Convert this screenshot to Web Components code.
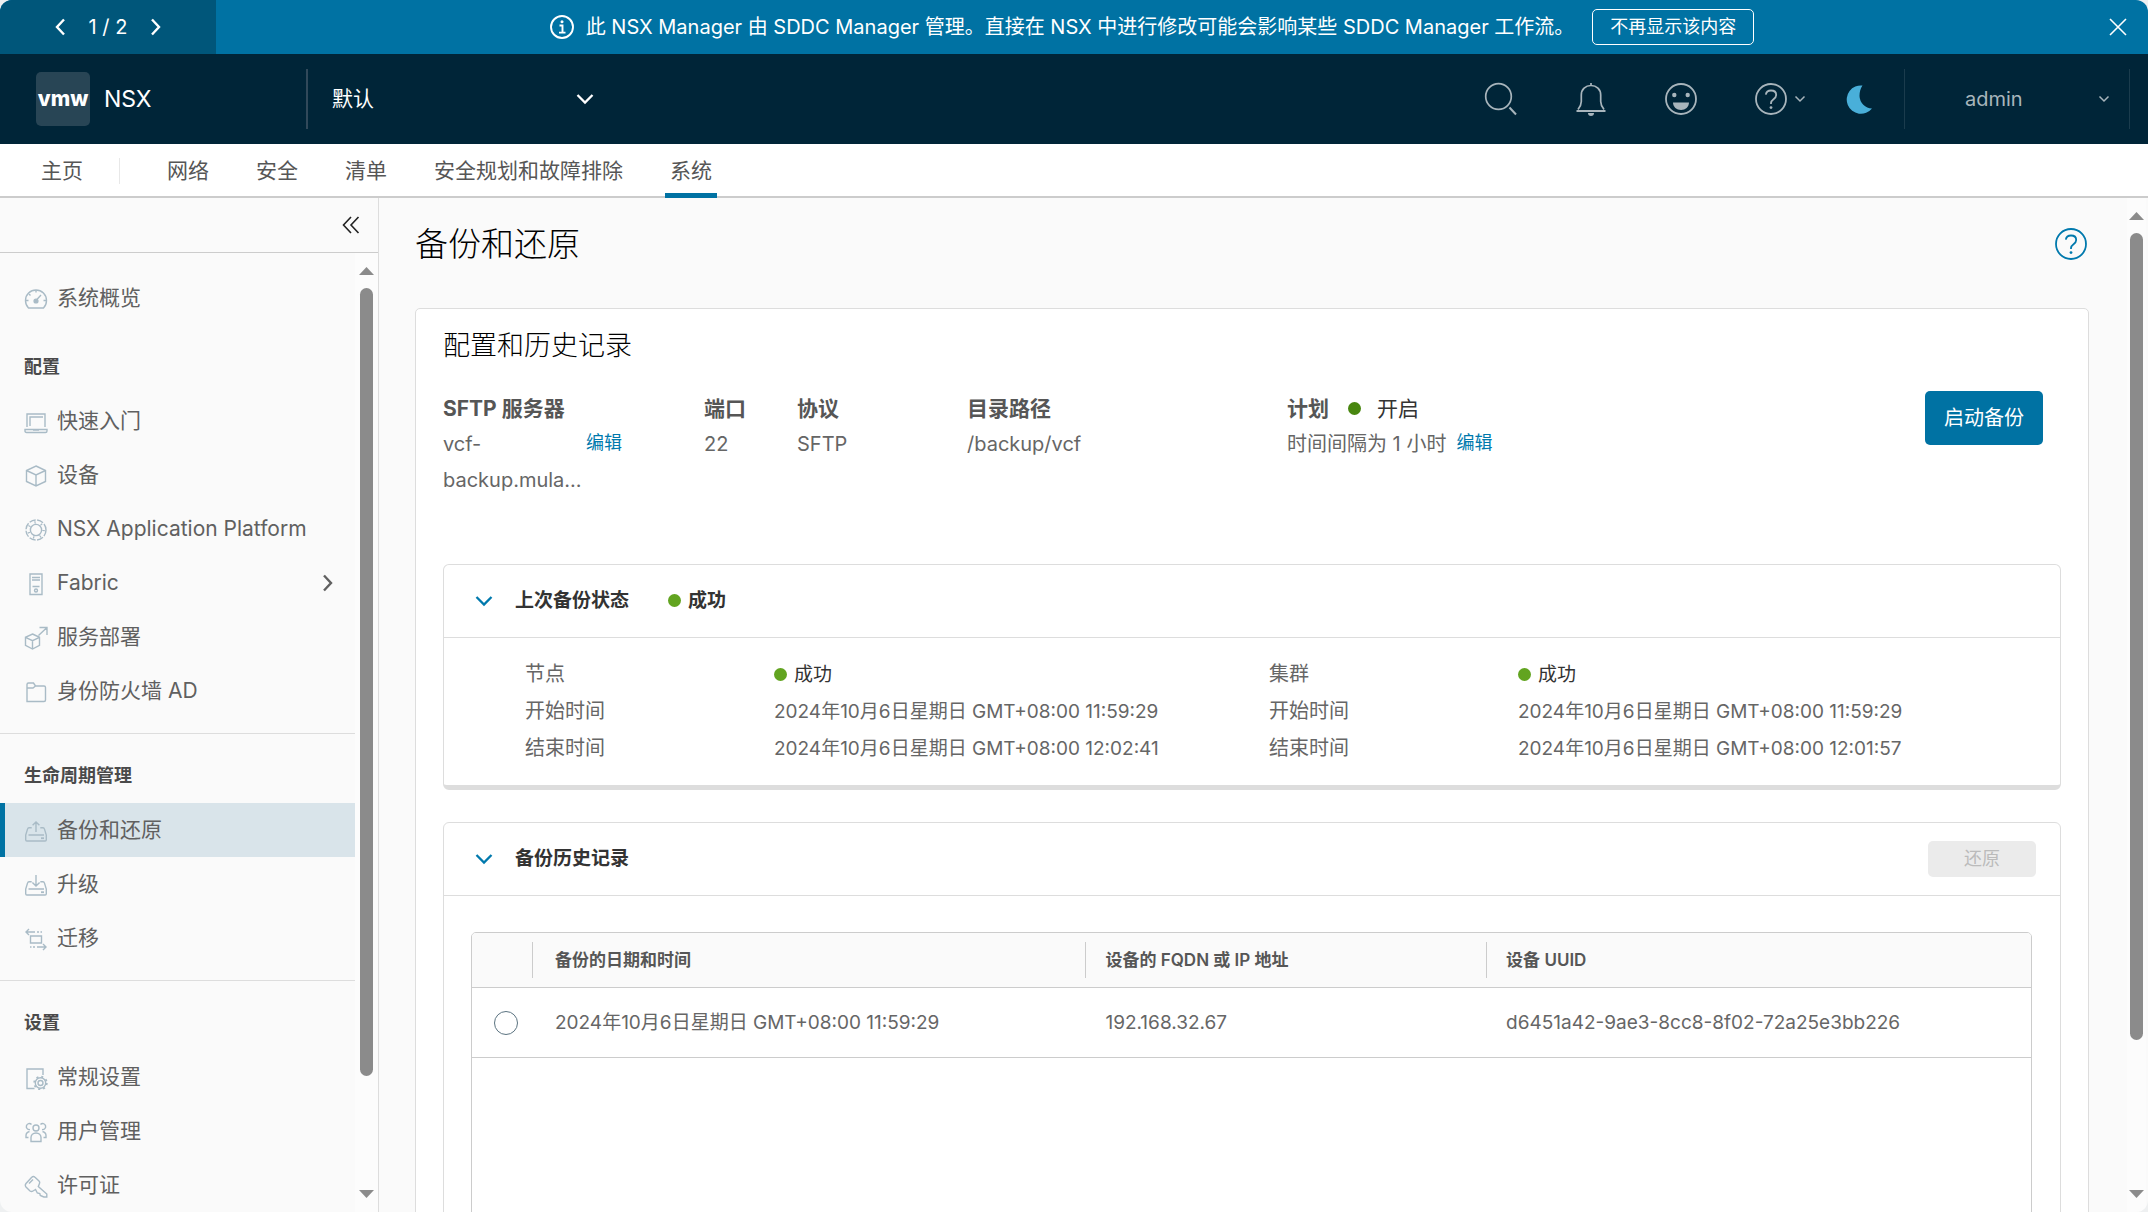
<!DOCTYPE html>
<html lang="zh-CN">
<head>
<meta charset="utf-8">
<meta name="viewport" content="width=device-width, initial-scale=1">
<title>NSX - 备份和还原</title>
<style>
  html, body { margin: 0; height: 100%; }
  body {
    overflow: hidden;
    background: #eef0f1;
    color: #666;
    font-family: Inter, "Noto Sans CJK SC", sans-serif;
    font-size: 20px;
    font-weight: 400;
    line-height: 36px;
  }
</style>
</head>
<body>
<nsx-app></nsx-app>

<script>
const sheet = `
  *, *::before, *::after { box-sizing: border-box; }
  button, select, input { font: inherit; color: inherit; margin: 0; }
  button { background: none; border: 0; padding: 0; cursor: pointer; }
  a { color: inherit; text-decoration: none; }
  h1, h2, h3, p, ul, dl, dd, dt { margin: 0; padding: 0; font: inherit; }
  ul { list-style: none; }
`;

const define = (name, render) => customElements.define(name, class extends HTMLElement {
  constructor() {
    super();
    this.attachShadow({ mode: 'open' });
  }
  connectedCallback() {
    this.shadowRoot.innerHTML = '<style>' + sheet + '</style>' + render(this);
  }
});

/* Icon set: every glyph is [viewBox, body]; strokes take currentColor. */
const icons = {
  left: ['0 0 12 18', '<path d="M10 1.5 3 9l7 7.500" stroke-width="2.400"/>'],
  right: ['0 0 12 18', '<path d="M2 1.500 9 9l-7 7.500" stroke-width="2.400"/>'],
  down: ['0 0 18 12', '<path d="M1.500 2 9 9.500 16.500 2" stroke-width="2.300"/>'],
  caret: ['0 0 12 8', '<path d="M1.500 1.500 6 6l4.500-4.500" stroke-width="1.500"/>'],
  collapse: ['0 0 18 18', '<path d="M9 1 1.500 9 9 17M16.500 1 9 9l7.500 8" stroke-width="1.600"/>'],
  close: ['0 0 18 18', '<path d="M1 1l16 16M17 1 1 17" stroke-width="1.600"/>'],
  info: ['0 0 24 24', '<circle cx="12" cy="12" r="11" stroke-width="1.900"/><circle cx="12" cy="6.800" r="1.500" fill="currentColor" stroke="none"/><path d="M9.500 10.500H12.500V17.500M9 17.600h6.500" stroke-width="1.900"/>'],
  search: ['0 0 34 34', '<circle cx="14.500" cy="14.500" r="12.800" stroke-width="1.700"/><path d="M25.500 25.500 32 32.500" stroke-width="2"/>'],
  bell: ['0 0 34 34', '<path d="M17 1v2.500M4 27.500c2-2.500 3.300-4.500 3.300-8V13C7.300 7.500 11.500 3.500 17 3.500s9.700 4 9.700 9.500v6.500c0 3.500 1.300 5.500 3.300 8" stroke-width="1.700"/><path d="M2.500 29h29" stroke-width="2"/><path d="M14 31h6a3 3 0 0 1-6 0z" fill="currentColor" stroke="none"/>'],
  smile: ['0 0 34 34', '<circle cx="17" cy="17" r="15" stroke-width="1.800"/><circle cx="10.300" cy="13" r="2.200" fill="currentColor" stroke="none"/><circle cx="23.700" cy="13" r="2.200" fill="currentColor" stroke="none"/><path d="M9 20.500h16c0 4.500-3.600 7.500-8 7.500s-8-3-8-7.500z" fill="currentColor" stroke="none"/>'],
  help: ['0 0 34 34', '<circle cx="17" cy="17" r="15" stroke-width="1.800"/><path d="M11.800 12.600c.4-2.600 2.500-4.100 5.200-4.100 3 0 5.200 1.700 5.200 4.500 0 4.300-5.200 4-5.200 8v1" stroke-width="1.800"/><circle cx="17" cy="25.600" r="1.400" fill="currentColor" stroke="none"/>'],
  moon: ['0 0 30 30', '<path d="M18.500 1.500A14.200 14.200 0 1 0 28 24.500 13 13 0 0 1 15.500 12c0-4.300 1-7.800 3-10.500z" fill="currentColor" stroke="none"/>'],
  gauge: ['0 0 24 24', '<path d="M4.500 21C2.500 19 1.500 16.500 1.500 13.500a10.500 10.500 0 0 1 21 0c0 3-1 5.500-3 7.500z"/><path d="M12 13.500l5-5.500M12 3v2.500M2 13.500h2.500M19.500 13.500H22M5 7l1.500 1.500"/><circle cx="12" cy="14" r="1.900" fill="currentColor"/>'],
  laptop: ['0 0 24 24', '<path d="M3 17V4h18v13M6 16V7h13M1 19.500h22v1.500c0 1-.5 1.500-1.500 1.500h-19c-1 0-1.500-.5-1.500-1.500z"/><path d="M9 20h6"/>'],
  box: ['0 0 24 24', '<path d="M12 2l9.500 4.500v11L12 22l-9.500-4.500v-11zM2.500 6.500 12 11l9.500-4.500M12 11v11"/>'],
  platform: ['0 0 24 24', '<circle cx="12" cy="12" r="10" stroke-dasharray="6.500 1.500"/><circle cx="12" cy="12" r="5.600"/><circle cx="12" cy="12" r="7.600" stroke-dasharray="1.200 5.600" stroke-width="2.500"/>'],
  server: ['0 0 24 24', '<path d="M6 2h12v20.500H6zM8 5.500h8M8 8h8M8.500 14.500h7"/><circle cx="12" cy="18.500" r="1.500"/>'],
  deploy: ['0 0 24 24', '<path d="M8.500 8l7 3.300v8L8.500 23l-7-3.700v-8zM1.500 11.300l7 3.400 7-3.400M8.500 14.700V23M14.500 9.500 23 1.500M15.500 1.500H23V9"/>'],
  folder: ['0 0 24 24', '<path d="M3 21.500V4.500c0-1 .5-1.500 1.500-1.500h5l2 3H20c1 0 1.500.5 1.500 1.500V20c0 1-.5 1.500-1.500 1.500zM3 8h6l2.500-2"/>'],
  backup: ['0 0 24 24', '<path d="M7.700 8.700H5c-.8 0-1.200.4-1.400 1.200L1.700 16v4.800c0 .8.400 1.200 1.200 1.200h18.200c.8 0 1.200-.4 1.200-1.200V16l-1.900-6.100c-.2-.8-.6-1.200-1.400-1.200h-2.700M4.500 16h15.500M12 13V3M8.600 6.300 12 2.900l3.400 3.400"/><path d="M17 19.200h3" stroke-width="1.800"/>'],
  upgrade: ['0 0 24 24', '<path d="M7.700 8.700H5c-.8 0-1.200.4-1.400 1.200L1.700 16v4.800c0 .8.400 1.200 1.200 1.200h18.200c.8 0 1.200-.4 1.200-1.200V16l-1.900-6.100c-.2-.8-.6-1.200-1.400-1.200h-2.700M4.500 16h15.500M12 2v10.800M8.400 9.400 12 13l3.600-3.600"/><path d="M17 19.200h3" stroke-width="1.800"/>'],
  migrate: ['0 0 24 24', '<path d="M6.500 9h11v7h-11zM2 5h9M13 5h2M16.500 5h1.500M5 2 2 5l3 3M22 20h-9M11 20H9M7.500 20H6M19 17l3 3-3 3"/>'],
  config: ['0 0 24 24', '<path d="M10.500 22.500H3V3h16v6"/><circle cx="16.500" cy="17" r="2.500"/><circle cx="16.500" cy="17" r="5.200"/><circle cx="16.500" cy="17" r="6.300" stroke-dasharray="2 2.950" stroke-width="1.800"/>'],
  users: ['0 0 24 24', '<circle cx="12" cy="8" r="3"/><path d="M7 21.500v-4c0-2.500 2-4.500 5-4.500s5 2 5 4.500v4zM7.500 4.500A3 3 0 1 0 6 9.500M16.500 4.500A3 3 0 1 1 18 9.500M5.500 11.500c-2 .5-3.500 2-3.500 4v2h2.500M18.500 11.500c2 .5 3.500 2 3.500 4v2h-2.500"/>'],
  key: ['0 0 24 24', '<path d="M11.500 15.500 9 17c-1 .7-2 .7-3 0l-4-4c-.8-1-.8-2.500 0-3.500l5.500-6c1-1 2.500-1.300 3.500-.3l4 3.800c1 1 .8 2 .3 3l-1 2.500 8.500 7.500v3h-3l-3.500-1.500-.500-2-2.500-.5z"/><path d="M5 9.500l4-4"/>']
};

/* <nsx-icon name size> */
define('nsx-icon', el => {
  const [box, body] = icons[el.getAttribute('name')];
  const w = +box.split(' ')[2], h = +box.split(' ')[3];
  const width = +(el.getAttribute('size') || w);
  return `<style>:host{display:inline-flex;flex:none}svg{display:block;fill:none;stroke:currentColor}</style>
  <svg viewBox="${box}" width="${width}" height="${Math.round(width * h / w)}" stroke-width="1.400" aria-hidden="true">${body}</svg>`;
});

/* <nsx-status wide> green state dot followed by its text */
define('nsx-status', () => `
  <style>
    :host { display: inline-flex; align-items: center; gap: 7px; color: #333; --dot: #62a420; }
    :host([wide]) { gap: 16px; --dot: #48860f; }
    i { width: 13px; height: 13px; border-radius: 50%; background: var(--dot); }
  </style><i></i><span><slot></slot></span>`);

/* <nsx-scrollbar thumb rest> rail with arrows; the thumb takes its share of the track */
define('nsx-scrollbar', el => `
  <style>
    :host { display: flex; flex-direction: column; align-items: center; flex: none; box-sizing: border-box; background: #fcfcfc; }
    svg { display: block; fill: #8b8b8b; flex: none; }
    .track { flex: 1; width: 13px; margin: 13px 0; display: flex; flex-direction: column; }
    .thumb { flex: ${el.getAttribute('thumb')} 0 0; background: #8b8b8b; border-radius: 7px; }
    .rest { flex: ${el.getAttribute('rest')} 0 0; }
  </style>
  <svg width="15" height="8"><path d="M0 8 7.500 0 15 8z"/></svg>
  <div class="track"><div class="thumb"></div><div class="rest"></div></div>
  <svg width="15" height="8"><path d="M0 0h15L7.500 8z"/></svg>`);

define('nsx-banner', () => `
  <style>
    :host { display: flex; height: 54px; background: #0072a3; color: #fff; line-height: 30px; }
    .pager { width: 216px; background: #00567a; display: flex; align-items: center; justify-content: center; gap: 23px; }
    .message { flex: 1; display: flex; align-items: center; justify-content: center; gap: 12px; white-space: nowrap; }
    .dismiss { height: 36px; padding: 0 17px; margin-left: 6px; border: 1px solid #fff; border-radius: 5px; font-size: 18px; line-height: 30px; }
    .close { width: 60px; display: flex; align-items: center; justify-content: center; }
    button { display: inline-flex; align-items: center; }
  </style>
  <div class="pager">
    <button aria-label="上一条"><nsx-icon name="left"></nsx-icon></button>
    <span>1 / 2</span>
    <button aria-label="下一条"><nsx-icon name="right"></nsx-icon></button>
  </div>
  <div class="message">
    <nsx-icon name="info"></nsx-icon>
    <span>此 NSX Manager 由 SDDC Manager 管理。直接在 NSX 中进行修改可能会影响某些 SDDC Manager 工作流。</span>
    <button class="dismiss">不再显示该内容</button>
  </div>
  <button class="close" aria-label="关闭"><nsx-icon name="close"></nsx-icon></button>`);

define('nsx-header', () => `
  <style>
    :host { display: flex; align-items: center; height: 90px; background: #002538; color: #a8b5bc; }
    .brand { display: flex; align-items: center; gap: 14px; width: 306px; padding-left: 36px; color: #fff; font-size: 23px; }
    .logo { width: 54px; height: 54px; border-radius: 5px; background: #284555; display: flex; align-items: center; justify-content: center; font-size: 21px; font-weight: 800; }
    .scope { display: flex; align-items: center; height: 60px; width: 288px; padding-left: 24px; border-left: 2px solid #31495a; color: #fff; font-size: 21px; }
    select { flex: 1; appearance: none; background: transparent; border: 0; padding: 0; outline: 0; height: 60px; }
    .tools { margin-left: auto; display: flex; align-items: center; gap: 56px; padding-right: 30px; }
    .tools button { display: flex; align-items: center; }
    .help { gap: 6px; }
    .moon { color: #49afd9; margin-left: -18px; }
    .user { display: flex; align-items: center; justify-content: space-between; height: 60px; width: 226px; padding: 0 19px 0 60px; border: solid #1b3c4d; border-width: 0 1px; margin-right: 18px; }
  </style>
  <div class="brand"><span class="logo">vmw</span><span>NSX</span></div>
  <label class="scope"><select aria-label="范围"><option>默认</option></select><nsx-icon name="down"></nsx-icon></label>
  <div class="tools">
    <button aria-label="搜索"><nsx-icon name="search"></nsx-icon></button>
    <button aria-label="警报"><nsx-icon name="bell"></nsx-icon></button>
    <button aria-label="反馈"><nsx-icon name="smile"></nsx-icon></button>
    <button class="help" aria-label="帮助"><nsx-icon name="help"></nsx-icon><nsx-icon name="caret"></nsx-icon></button>
    <button class="moon" aria-label="深色主题"><nsx-icon name="moon"></nsx-icon></button>
  </div>
  <button class="user"><span>admin</span><nsx-icon name="caret"></nsx-icon></button>`);

define('nsx-tabs', () => `
  <style>
    :host { display: flex; height: 54px; padding: 0 36px; gap: 37px; background: #fff; border-bottom: 2px solid #ccc; color: #565656; font-size: 21px; box-sizing: border-box; }
    a { height: 54px; padding: 0 5px; line-height: 53px; white-space: nowrap; }
    a[aria-current] { border-bottom: 5px solid #0072a3; }
    i { width: 1px; height: 26px; margin: 14px 5px 0 -6px; background: #e8e8e8; }
  </style>
  <a href="#home">主页</a><i></i><a href="#network">网络</a><a href="#security">安全</a><a href="#inventory">清单</a>
  <a href="#plan">安全规划和故障排除</a><a href="#system" aria-current="page">系统</a>`);

/* <nsx-nav-item icon active expandable>label</nsx-nav-item> */
define('nsx-nav-item', el => `
  <style>
    :host { display: block; }
    a { display: flex; align-items: center; gap: 9px; height: 54px; padding: 0 21px 0 19px; border-left: 5px solid transparent; font-size: 21px; line-height: 52px; white-space: nowrap; }
    .icon { color: #a9bbc6; margin-top: 2px; }
    .label { flex: 1; }
    :host([active]) a { background: #d9e4ea; border-left-color: #0072a3; }
  </style>
  <a href="#${el.getAttribute('icon')}"><nsx-icon class="icon" name="${el.getAttribute('icon')}"></nsx-icon>
  <span class="label"><slot></slot></span>${el.hasAttribute('expandable') ? '<nsx-icon name="right"></nsx-icon>' : ''}</a>`);

/* <nsx-nav-section heading divided> */
define('nsx-nav-section', el => `
  <style>
    :host { display: block; padding-top: 15px; }
    :host([divided]) .body { border-top: 1px solid #ddd; padding-top: 15px; }
    h2 { height: 54px; padding-left: 24px; color: #4a4a4a; font-size: 18px; font-weight: 700; line-height: 54px; }
  </style>
  <div class="body"><h2>${el.getAttribute('heading')}</h2><slot></slot></div>`);

define('nsx-sidebar', () => `
  <style>
    :host { display: flex; flex-direction: column; width: 379px; flex: none; min-height: 0; border-right: 1px solid #ddd; box-sizing: border-box; color: #606060; }
    .top { display: flex; align-items: center; justify-content: flex-end; height: 55px; padding-right: 18px; border-bottom: 1px solid #ccc; flex: none; color: #222; }
    .body { flex: 1; min-height: 0; display: flex; }
    nav { flex: 1; min-width: 0; overflow: hidden; padding-top: 18px; }
    nsx-scrollbar { width: 23px; padding: 14px 0; }
    .top button { display: flex; }
  </style>
  <div class="top"><button aria-label="折叠"><nsx-icon name="collapse"></nsx-icon></button></div>
  <div class="body">
    <nav>
      <nsx-nav-item icon="gauge">系统概览</nsx-nav-item>
      <nsx-nav-section heading="配置">
        <nsx-nav-item icon="laptop">快速入门</nsx-nav-item>
        <nsx-nav-item icon="box">设备</nsx-nav-item>
        <nsx-nav-item icon="platform">NSX Application Platform</nsx-nav-item>
        <nsx-nav-item icon="server" expandable>Fabric</nsx-nav-item>
        <nsx-nav-item icon="deploy">服务部署</nsx-nav-item>
        <nsx-nav-item icon="folder">身份防火墙 AD</nsx-nav-item>
      </nsx-nav-section>
      <nsx-nav-section heading="生命周期管理" divided>
        <nsx-nav-item icon="backup" active>备份和还原</nsx-nav-item>
        <nsx-nav-item icon="upgrade">升级</nsx-nav-item>
        <nsx-nav-item icon="migrate">迁移</nsx-nav-item>
      </nsx-nav-section>
      <nsx-nav-section heading="设置" divided>
        <nsx-nav-item icon="config">常规设置</nsx-nav-item>
        <nsx-nav-item icon="users">用户管理</nsx-nav-item>
        <nsx-nav-item icon="key">许可证</nsx-nav-item>
      </nsx-nav-section>
    </nav>
    <nsx-scrollbar thumb="788" rest="101"></nsx-scrollbar>
  </div>`);

/* <nsx-summary> connection settings row with the start button */
define('nsx-summary', () => `
  <style>
    :host { display: flex; align-items: flex-start; height: 173px; }
    dl { flex: 1; display: grid; grid-template-columns: 261px 93px 170px 320px 1fr; }
    dt { height: 35px; color: #565656; font-size: 21px; font-weight: 700; line-height: 35px; display: flex; align-items: center; gap: 19px; white-space: nowrap; }
    dd { display: flex; gap: 10px; line-height: 36px; }
    nsx-status { font-weight: 400; }
    .host { width: 133px; }
    a { color: #0079ad; font-size: 18px; line-height: 34px; }
    .start { height: 54px; padding: 0 19px; margin-right: 18px; border-radius: 5px; background: #0072a3; color: #fff; font-size: 20px; line-height: 54px; }
  </style>
  <dl>
    <div><dt>SFTP 服务器</dt><dd><span class="host">vcf-<br>backup.mula...</span><a href="#edit-server">编辑</a></dd></div>
    <div><dt>端口</dt><dd>22</dd></div>
    <div><dt>协议</dt><dd>SFTP</dd></div>
    <div><dt>目录路径</dt><dd>/backup/vcf</dd></div>
    <div><dt>计划<nsx-status wide>开启</nsx-status></dt><dd>时间间隔为 1 小时<a href="#edit-schedule">编辑</a></dd></div>
  </dl>
  <button class="start">启动备份</button>`);

define('nsx-panel', el => `
  <style>
    :host { display: block; border: 1px solid #ddd; border-radius: 6px; background: #fff; }
    :host([raised]) { border-bottom-width: 5px; }
    .head { display: flex; align-items: center; height: 73px; padding: 0 24px 0 31px; border-bottom: 1px solid #ddd; }
    .toggle { display: flex; align-items: center; gap: 22px; color: #0079ad; }
    h3 { color: #333; font-size: 19px; font-weight: 700; line-height: 36px; }
    .extra { flex: 1; padding-left: 39px; font-size: 19px; font-weight: 700; }
  </style>
  <div class="head">
    <button class="toggle" aria-expanded="true"><nsx-icon name="down"></nsx-icon><h3>${el.getAttribute('heading')}</h3></button>
    <div class="extra"><slot name="extra"></slot></div>
    <slot name="action"></slot>
  </div>
  <slot></slot>`);

/* <nsx-run subject start end> one backup run */
define('nsx-run', el => `
  <style>
    :host { display: block; }
    dl { display: grid; grid-template-columns: 249px 1fr; font-size: 20px; line-height: 37px; }
    dd { white-space: nowrap; font-size: 19px; }
  </style>
  <dl>
    <dt>${el.getAttribute('subject')}</dt><dd><nsx-status>成功</nsx-status></dd>
    <dt>开始时间</dt><dd>${el.getAttribute('start')}</dd>
    <dt>结束时间</dt><dd>${el.getAttribute('end')}</dd>
  </dl>`);

define('nsx-history', () => `
  <style>
    :host { display: block; padding: 36px 28px 0 27px; }
    .grid { border: 1px solid #ccc; border-radius: 5px; min-height: 340px; overflow: hidden; }
    table { width: 100%; border-collapse: separate; border-spacing: 0; table-layout: fixed; }
    th, td { text-align: left; padding: 0; border-bottom: 1px solid #ccc; white-space: nowrap; }
    thead { background: #fafafa; }
    th { height: 55px; color: #565656; font-size: 17px; font-weight: 600; line-height: 36px; }
    th div { padding-left: 19px; border-left: 1px solid #ccc; }
    th:nth-child(2) div { padding-left: 22px; }
    td { height: 70px; padding-left: 20px; font-size: 19px; }
    td:nth-child(2) { padding-left: 23px; }
    td:first-child { padding-left: 22px; }
    input { appearance: none; display: block; width: 24px; height: 24px; border: 1px solid #5b7380; border-radius: 50%; background: #fff; }
  </style>
  <div class="grid"><table>
    <colgroup><col style="width:60px"><col style="width:35.500%"><col style="width:25.700%"><col></colgroup>
    <thead><tr><th></th><th><div>备份的日期和时间</div></th><th><div>设备的 FQDN 或 IP 地址</div></th><th><div>设备 UUID</div></th></tr></thead>
    <tbody><tr>
      <td><input type="radio" name="backup" aria-label="选择备份"></td>
      <td>2024年10月6日星期日 GMT+08:00 11:59:29</td><td>192.168.32.67</td><td>d6451a42-9ae3-8cc8-8f02-72a25e3bb226</td>
    </tr></tbody>
  </table></div>`);

define('nsx-backup-page', () => `
  <style>
    :host { display: block; flex: 1; min-width: 0; overflow: hidden; padding: 22px 38px 0 36px; }
    .title { display: flex; align-items: center; justify-content: space-between; height: 48px; margin-bottom: 40px; padding-right: 1px; }
    h1 { color: #000; font-size: 33px; font-weight: 300; line-height: 48px; }
    .title a { color: #0079ad; display: flex; }
    .card { border: 1px solid #ddd; border-radius: 5px; background: #fff; padding: 19px 27px 60px; }
    h2 { color: #000; font-size: 27px; font-weight: 300; line-height: 36px; margin-bottom: 27px; }
    nsx-panel + nsx-panel { margin-top: 32px; }
    .runs { display: grid; grid-template-columns: 744px 1fr; padding: 18px 0 18px 81px; }
    .restore { width: 108px; height: 36px; border: 0; border-radius: 5px; background: #ebebeb; color: #bbb; font: inherit; font-size: 18px; line-height: 34px; padding: 0; }
  </style>
  <div class="title"><h1>备份和还原</h1><a href="#help" aria-label="帮助"><nsx-icon name="help"></nsx-icon></a></div>
  <section class="card">
    <h2>配置和历史记录</h2>
    <nsx-summary></nsx-summary>
    <nsx-panel heading="上次备份状态" raised>
      <nsx-status slot="extra">成功</nsx-status>
      <div class="runs">
        <nsx-run subject="节点" start="2024年10月6日星期日 GMT+08:00 11:59:29" end="2024年10月6日星期日 GMT+08:00 12:02:41"></nsx-run>
        <nsx-run subject="集群" start="2024年10月6日星期日 GMT+08:00 11:59:29" end="2024年10月6日星期日 GMT+08:00 12:01:57"></nsx-run>
      </div>
    </nsx-panel>
    <nsx-panel heading="备份历史记录">
      <button class="restore" slot="action" disabled>还原</button>
      <nsx-history></nsx-history>
    </nsx-panel>
  </section>`);

define('nsx-app', () => `
  <style>
    :host { display: flex; flex-direction: column; height: 100vh; border-radius: 12px; overflow: hidden; background: #fafafa; }
    main { flex: 1; min-height: 0; display: flex; }
    .rail { width: 19px; padding: 14px 0; margin-right: 2px; }
  </style>
  <nsx-banner></nsx-banner>
  <nsx-header></nsx-header>
  <nsx-tabs></nsx-tabs>
  <main>
    <nsx-sidebar></nsx-sidebar>
    <nsx-backup-page></nsx-backup-page>
    <nsx-scrollbar class="rail" thumb="807" rest="137"></nsx-scrollbar>
  </main>`);
</script>
</body>
</html>
